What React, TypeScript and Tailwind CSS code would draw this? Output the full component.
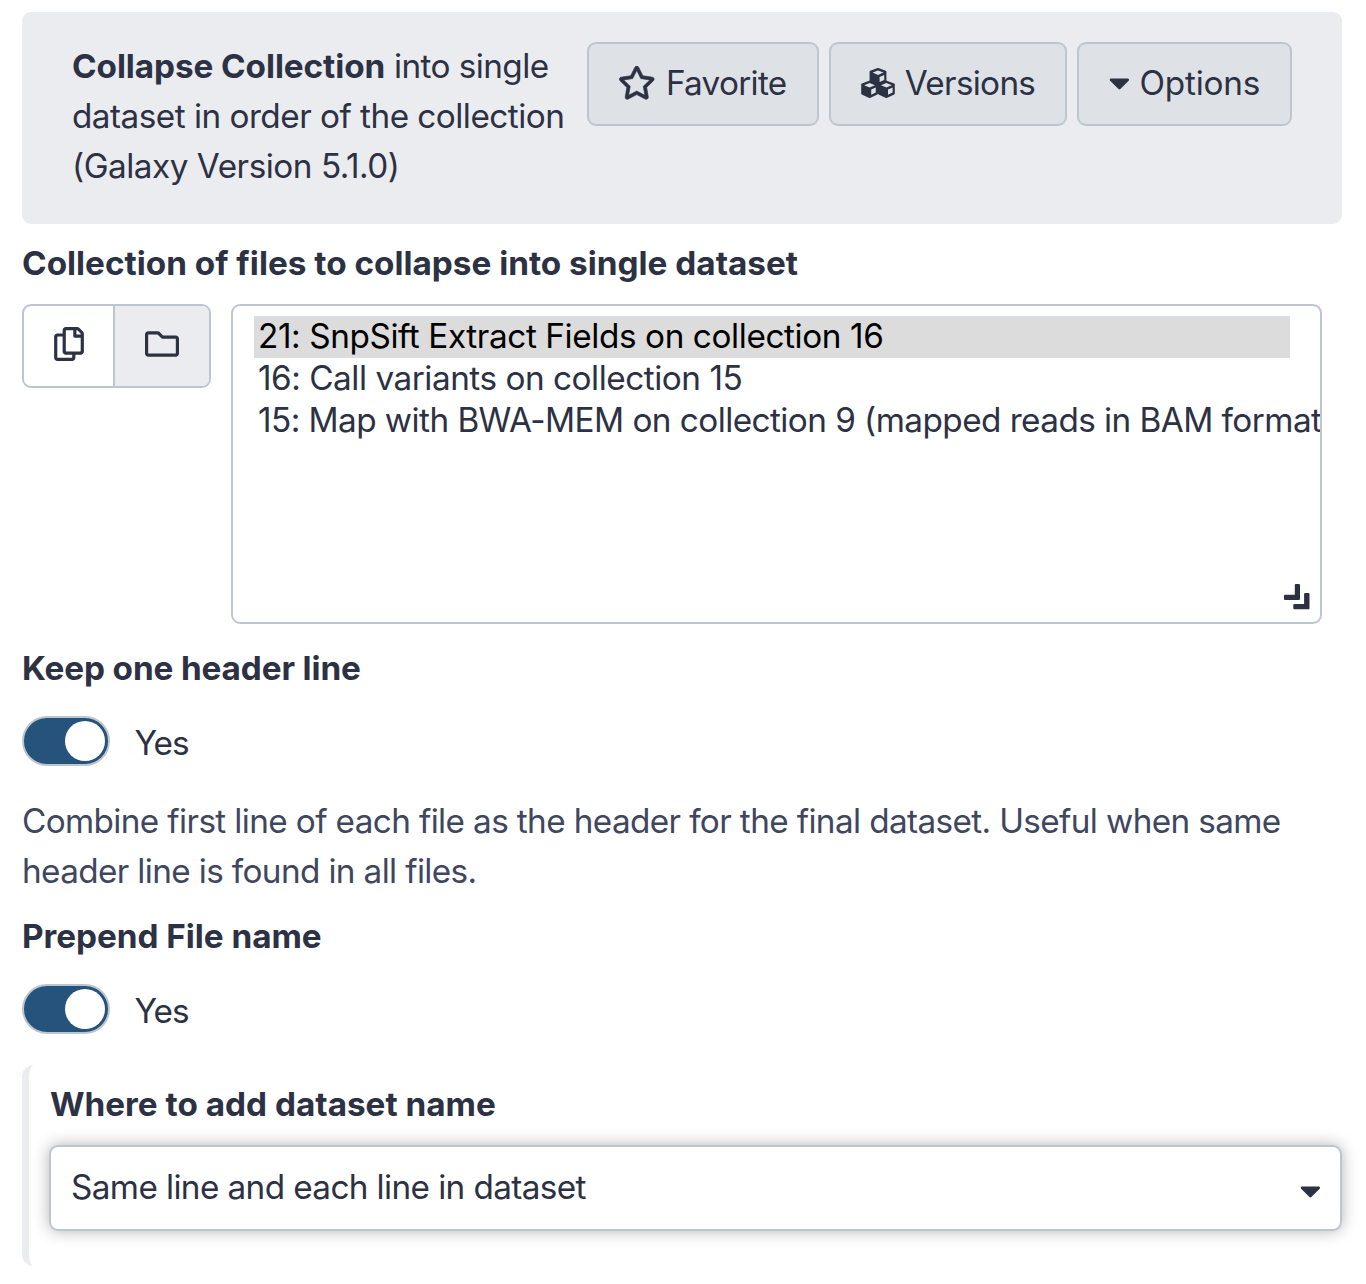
import React from "react";
import { FaCaretDown, FaRegCopy, FaRegFolder, FaRegStar } from "react-icons/fa";

function ToolButton({ width, children }: { width: string; children: React.ReactNode }) {
  return (
    <button
      className={`flex h-[84px] shrink-0 items-center justify-center whitespace-nowrap rounded-[9px] border-2 border-[#bdc6d0] bg-[#dee2e6] pb-0.5 ${width}`}
    >
      {children}
    </button>
  );
}

function Cube({ x, y }: { x: number; y: number }) {
  return (
    <g transform={`translate(${x} ${y})`}>
      <path
        d="M8.6 1L16 3.8V13L8.6 16.4L1.2 13V3.8Z"
        fill="currentColor"
        stroke="currentColor"
        strokeWidth="2"
        strokeLinejoin="round"
      />
      <path d="M8.6 2.5L14 4.6L8.6 6.9L3.2 4.6Z" fill="#dee2e6" />
      <path d="M10.2 9L14.8 7V12L10.2 14.1Z" fill="#dee2e6" />
    </g>
  );
}

function CubesIcon() {
  return (
    <svg viewBox="0 0 34 30.5" className="mr-[10px] h-[30.5px] w-[34px]">
      <Cube x={8.4} y={0} />
      <Cube x={0} y={12.6} />
      <Cube x={16.8} y={12.6} />
    </svg>
  );
}

function Toggle() {
  return (
    <div className="flex h-[50px] items-center">
      <button
        role="switch"
        aria-checked="true"
        className="flex h-[50px] w-[88px] items-center justify-end rounded-full border-2 border-[#bdc6d0] bg-[#25537b] pr-[3px]"
      >
        <span className="size-[40.5px] rounded-full bg-white" />
      </button>
      <span className="ml-[24.5px] mt-1 tracking-[-1px]">Yes</span>
    </div>
  );
}

function ResizeHandle() {
  return (
    <svg
      viewBox="0 0 26 26"
      className="absolute bottom-3 right-[10.5px] size-[26px]"
      fill="currentColor"
      stroke="currentColor"
      strokeWidth="2"
      strokeLinejoin="round"
    >
      <path d="M1 11.8H11.8V1H15V15H1Z" />
      <path d="M10.3 21H21.1V10H24.5V24.2H10.3Z" />
    </svg>
  );
}

export default function App() {
  return (
    <main className="flex h-[1284px] w-[1366px] flex-col overflow-hidden bg-white pl-[22px] pt-3 font-['Inter',sans-serif] text-[33.3px] leading-[50px] text-[#2c3143]">
      <header className="flex h-[212px] w-[1320px] shrink-0 rounded-[9px] bg-[#ebecef] pl-[50px] pt-[29px]">
        <div className="w-[515px] shrink-0 whitespace-nowrap">
          <div>
            <b className="font-bold tracking-[-0.08px]">Collapse Collection</b>
            <span className="tracking-[-0.57px]"> into single</span>
          </div>
          <div className="tracking-[-0.52px]">dataset in order of the collection</div>
          <div className="tracking-[-0.48px]">(Galaxy Version 5.1.0)</div>
        </div>
        <div className="mt-px flex gap-[10px]">
          <ToolButton width="w-[232px]">
            <FaRegStar className="mr-[10px] h-[33.3px] w-[37.5px] -ml-px stroke-current stroke-[10px]" />
            <span className="tracking-[-0.7px]">Favorite</span>
          </ToolButton>
          <ToolButton width="w-[238px]">
            <CubesIcon />
            <span className="tracking-[-0.7px]">Versions</span>
          </ToolButton>
          <ToolButton width="w-[215px]">
            <FaCaretDown className="mr-[10px] h-[33.3px] w-[20.8px]" />
            <span className="tracking-[-0.2px]">Options</span>
          </ToolButton>
        </div>
      </header>

      <h2 className="mt-[14px] h-[50px] font-bold">
        <span>Collection of files to collapse into single dataset</span>
      </h2>
      <div className="mt-4 flex h-[320px] shrink-0 gap-5">
        <div className="flex h-[84px] w-[189px] overflow-hidden rounded-[9px] border-2 border-[#bdc6d0]">
          <button className="flex w-[89px] items-center justify-center">
            <FaRegCopy className="mb-1 ml-px h-[34px] w-[30px]" />
          </button>
          <button className="flex flex-1 items-center justify-center border-l-2 border-[#bdc6d0] bg-[#ebecef]">
            <FaRegFolder className="mb-1 mr-px size-[34px]" />
          </button>
        </div>
        <div className="relative w-[1091px] overflow-hidden whitespace-nowrap rounded-[9px] border-2 border-[#bdc6d0] pl-[21px] pt-[10px] leading-[40px]">
          <div className="h-[42px] w-[1036px] bg-[#dcdcdc] pl-1 tracking-[-0.4px] text-black">
            21: SnpSift Extract Fields on collection 16
          </div>
          <div className="h-[42px] pl-1 tracking-[-0.47px]">16: Call variants on collection 15</div>
          <div className="h-[42px] pl-1 tracking-[-0.55px]">
            15: Map with BWA-MEM on collection 9 (mapped reads in BAM format
          </div>
          <ResizeHandle />
        </div>
      </div>

      <h2 className="mt-[19px] h-[50px] font-bold tracking-[-0.12px]">
        <span>Keep one header line</span>
      </h2>
      <div className="mt-[23px]">
        <Toggle />
      </div>
      <div className="mt-[30px] whitespace-nowrap text-[#3f475f]">
        <div className="tracking-[-0.625px]">
          Combine first line of each file as the header for the final dataset. Useful when same
        </div>
        <div className="tracking-[-0.64px]">header line is found in all files.</div>
      </div>

      <h2 className="mt-[15px] h-[50px] font-bold tracking-[-0.03px]">
        <span>Prepend File name</span>
      </h2>
      <div className="mt-[23px]">
        <Toggle />
      </div>

      <section className="mt-[31px] h-[201px] w-[1320px] shrink-0 rounded-[12px] border-l-[7px] border-[#ebecef] pl-5 pt-[14px]">
        <h2 className="h-[50px] whitespace-nowrap pl-px font-bold">
          <span>Where to add dataset name</span>
        </h2>
        <div className="mt-4 flex h-[86px] w-[1293px] items-center justify-between rounded-[9px] border-2 border-[#bdc6d0] bg-white pb-0.5 pl-5 pr-[19px] shadow-[0_0_16px_rgba(0,0,0,0.3)]">
          <span className="tracking-[-0.61px]">Same line and each line in dataset</span>
          <FaCaretDown className="mt-[7px] h-[33.3px] w-[20.8px]" />
        </div>
      </section>
    </main>
  );
}
